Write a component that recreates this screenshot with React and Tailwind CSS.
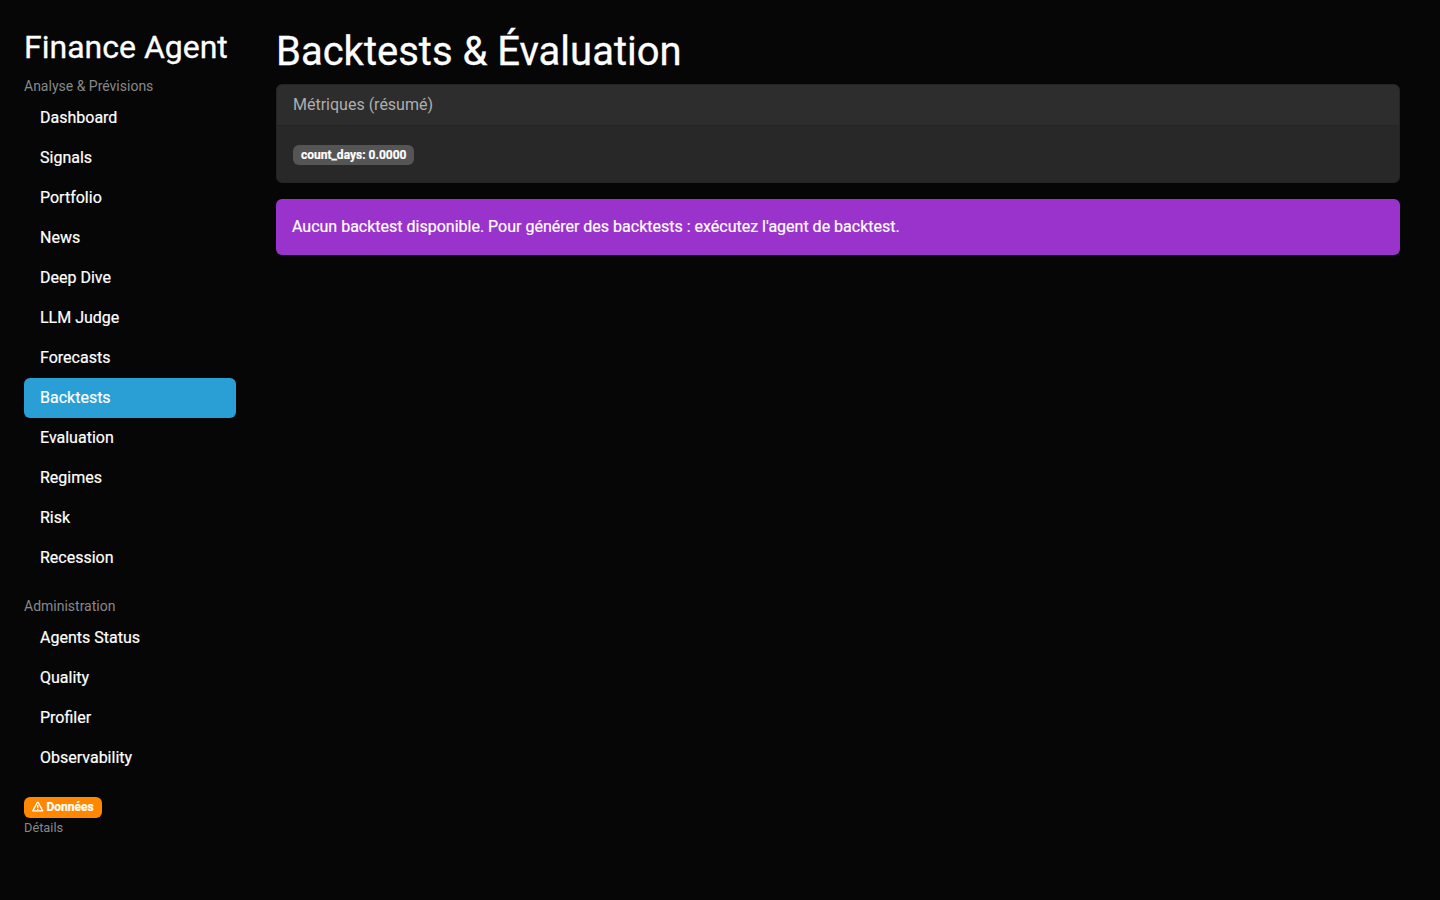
const analysis = ["Dashboard", "Signals", "Portfolio", "News", "Deep Dive", "LLM Judge", "Forecasts", "Backtests", "Evaluation", "Regimes", "Risk", "Recession"];
const admin = ["Agents Status", "Quality", "Profiler", "Observability"];

function Nav({ items, active }) {
  return (
    <nav className="flex flex-col">
      {items.map((item) => (
        <a
          key={item}
          href="#"
          className={
            item === active
              ? "rounded-md bg-[#2a9fd6] px-4 py-2 text-base text-white"
              : "rounded-md px-4 py-2 text-base text-white"
          }
        >
          {item}
        </a>
      ))}
    </nav>
  );
}

function WarningIcon() {
  return (
    <svg viewBox="0 0 12 12" className="mr-[3px] h-[11.5px] w-[11.5px]" fill="none" stroke="currentColor" strokeWidth="1.4" strokeLinejoin="round">
      <path d="M5.5 1.6H6.5L11.2 10.3H0.8Z" />
      <path d="M6 4.2V7.4M6 8.1V9.3" />
    </svg>
  );
}

export default function App() {
  return (
    <div className="flex h-[900px] overflow-hidden bg-[#060606] font-['Roboto',sans-serif] text-base text-white [-webkit-text-stroke:0.2px]">
      <aside className="w-[260px] shrink-0 px-6 pt-7">
        <h2 className="mb-[10px] text-[32px] leading-[38px] whitespace-nowrap [-webkit-text-stroke:0.3px]">Finance Agent</h2>
        <div className="mb-px text-sm leading-[21px] text-[#888] [-webkit-text-stroke:0px]">Analyse &amp; Prévisions</div>
        <Nav items={analysis} active="Backtests" />
        <div className="mt-[18px] mb-px text-sm leading-[21px] text-[#888] [-webkit-text-stroke:0px]">Administration</div>
        <Nav items={admin} />
        <div className="mt-[19px] flex">
          <span className="flex h-[21px] w-[78px] items-center rounded-md bg-[#ff8800] px-2 pb-[2px] text-xs font-bold">
            <WarningIcon />
            Données
          </span>
        </div>
        <div className="text-[12.8px] leading-5 text-[#888] [-webkit-text-stroke:0px]">Détails</div>
      </aside>
      <main className="min-w-0 flex-1 pt-7 pr-10 pl-4">
        <h1 className="mb-2 text-[40px] leading-[48px] [-webkit-text-stroke:0.3px]">Backtests &amp; Évaluation</h1>
        <section className="mb-4 h-[99px] overflow-hidden rounded-md border border-[#242424] bg-[#282828]">
          <div className="h-[41px] border-b border-[#242424] bg-[#2d2d2d] px-4 pt-2 text-[#adafae] [-webkit-text-stroke:0px]">Métriques (résumé)</div>
          <div className="flex px-4 pt-[19px]">
            <span className="h-5 rounded-md bg-[#555] px-2 text-xs leading-5 font-bold">count_days: 0.0000</span>
          </div>
        </section>
        <div className="rounded-md bg-[#9933cc] p-4">
          Aucun backtest disponible. Pour générer des backtests : exécutez l'agent de backtest.
        </div>
      </main>
    </div>
  );
}
